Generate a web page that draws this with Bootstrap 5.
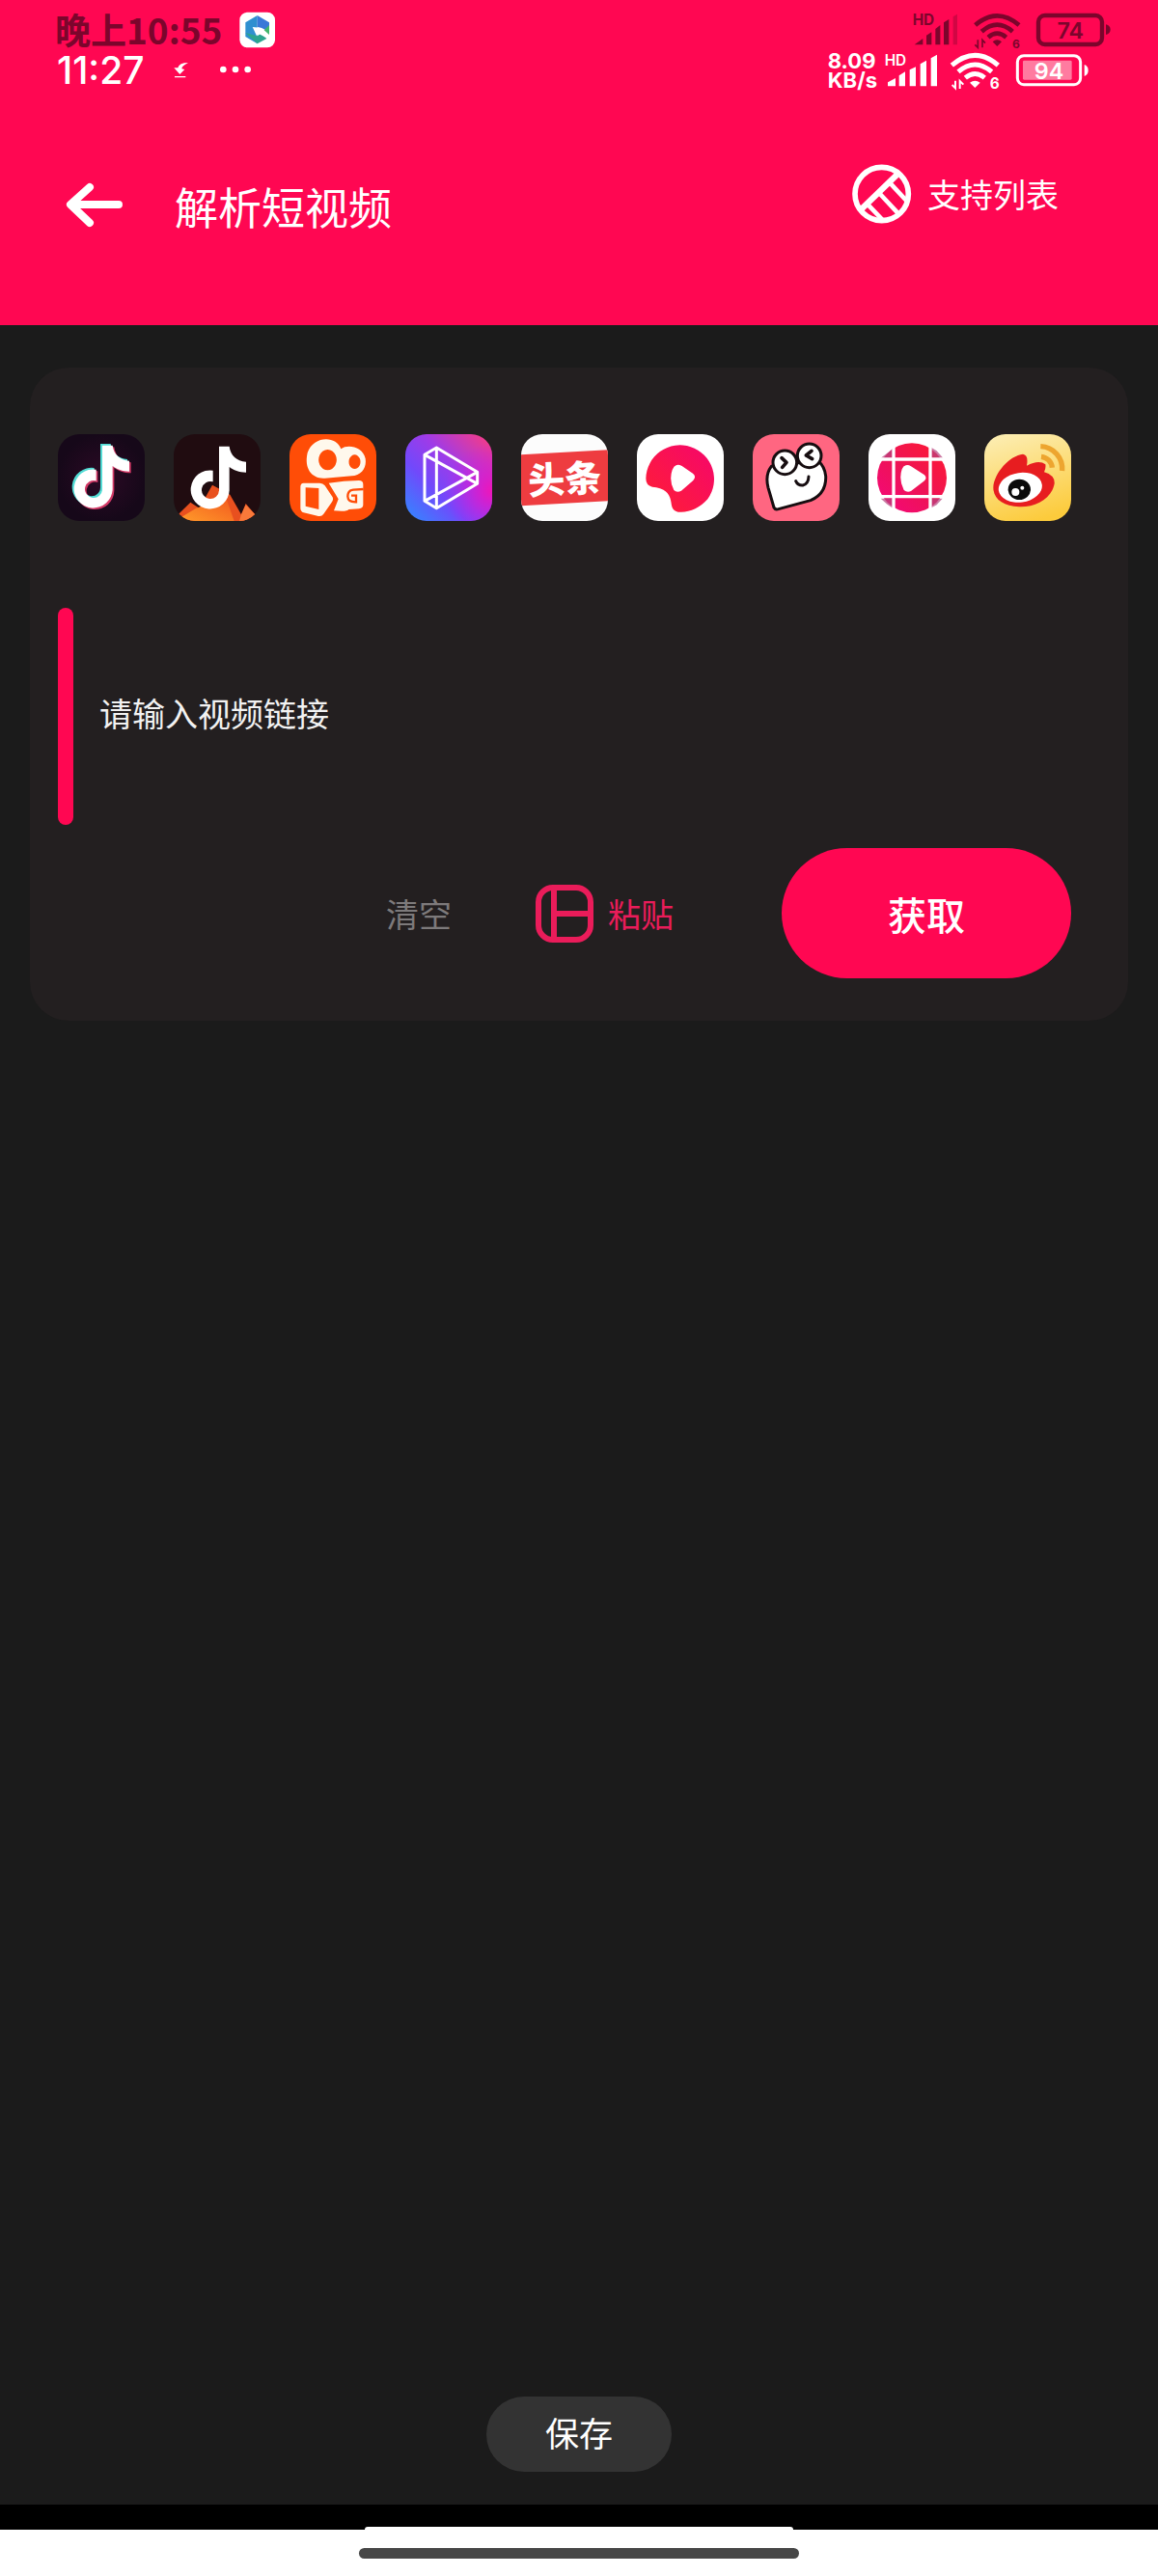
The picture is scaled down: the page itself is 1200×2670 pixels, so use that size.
<!DOCTYPE html>
<html lang="zh-CN">
<head>
<meta charset="utf-8">
<meta name="viewport" content="width=device-width, initial-scale=1">
<title>解析短视频</title>
<link href="https://cdn.jsdelivr.net/npm/bootstrap@5.3.0/dist/css/bootstrap.min.css" rel="stylesheet">
<style>
  :root { --pink: #ff0752; --ink: #7c052c; --panel: #231f20; --bg: #1b1b1b; }
  body { background: var(--bg); color: #fff; font-family: "Noto Sans CJK SC", "Noto Sans", sans-serif; font-size: 34px; line-height: 48px; }
  svg { display: block; flex: none; overflow: visible; }
  svg text { font-family: Inter, sans-serif; }
  .top-area { background: var(--pink); padding: 12px 0 93px; }
  .status-old { color: var(--ink); height: 41px; gap: 18px; line-height: 36px; font-size: 37px; font-weight: 700; padding: 0 48px 0 57px; }
  .status-new { height: 40px; line-height: 40px; padding: 0 71px 0 59px; }
  .clock { font-family: Inter, sans-serif; font-size: 39px; font-weight: 500; }
  .speed { font-family: Inter, sans-serif; font-size: 22px; line-height: 20px; font-weight: 700; }
  .gap-status { gap: 16px; }
  .gap-signal { gap: 13px; }
  .title-row { padding: 75px 103px 0 68px; }
  .title-row h1 { font-size: 45px; line-height: 60px; font-weight: 400; margin: 16px 0 0 53px; }
  .back-btn { padding: 20px 0 0; border: 0; border-radius: 0; }
  .support-link { color: #fff; gap: 16px; height: 66px; }
  .panel { background: var(--panel); border-radius: 40px; margin: 44px 31px 0; padding: 69px 59px 44px 29px; }
  .app-list { gap: 30px; }
  .app-list svg { width: 90px; height: 90px; border-radius: 22px; overflow: hidden; }
  .link-row { margin-top: 90px; height: 225px; }
  .accent { width: 16px; border-radius: 8px; background: var(--pink); }
  .link-input, .link-input:focus { background: transparent; color: #fff; border: 0; box-shadow: none; font-size: 34px; padding: 0 0 8px 27px; }
  .link-input::placeholder { color: #f2f2f2; opacity: 1; }
  .action-row { margin-top: 24px; }
  .clear-btn, .paste-btn { font-size: 34px; line-height: 48px; padding: 0; border: 0; color: #7d7a7b; }
  .paste-btn { color: #ea1c5a; gap: 14px; margin: 0 112px 0 86px; }
  .get-btn { background: var(--pink); color: #fff; width: 300px; height: 135px; font-size: 40px; font-weight: 500; border: 0; }
  .save-btn { background: #333; color: #fff; width: 192px; height: 78px; font-size: 35px; line-height: 48px; border: 0; padding: 0 0 4px; margin-bottom: 34px; }
  .nav-black { background: #000; height: 26px; }
  .nav-tab { width: 444px; height: 3px; background: #fff; border-radius: 3px 3px 0 0; }
  .nav-white { background: #fff; height: 48px; padding-top: 19px; }
  .home-bar { width: 456px; height: 11px; border-radius: 6px; background: #474747; }
</style>
</head>
<body>
<div class="d-flex flex-column min-vh-100">
  <header class="top-area">
    <div class="status-old d-flex align-items-start">
      <span>晚上10:55</span>
      <svg width="38" height="38" viewBox="741 36 114 114" aria-hidden="true">
        <rect x="742" y="38" width="110" height="110" rx="24" fill="#fff"/>
        <path d="M797 48 760 70V114L797 136Z" fill="#2f8fd0"/><path d="M797 48 834 70V100L812 88 797 84Z" fill="#3a78d8"/>
        <path d="M760 102 797 136 826 120 808 104 797 112Z" fill="#2ca58f"/><path d="M834 78V108L818 94Z" fill="#43b56b"/>
        <path d="M782 84 812 87 806 94 832 110 826 118 800 104 795 112Z" fill="#fff"/>
      </svg>
      <div class="d-flex gap-status ms-auto">
        <svg width="47" height="38" viewBox="318 36 141 114" fill="#7c052c">
          <text x="317" y="77" font-size="46" font-weight="700">HD</text>
          <path d="M323 139 349 120V139ZM360 110 376 100V139H360ZM388 90 403 78V139H388ZM414 70 430 60V139H414Z"/>
          <path d="M443 52 456 44V139H443Z" opacity=".35"/>
        </svg>
        <svg width="49" height="38" viewBox="507 36 147 114" fill="none" stroke="#7c052c" stroke-width="14">
          <path d="M512 78Q580 20 648 78M532 98Q580 56 628 98M552 116Q580 92 608 116"/>
          <path d="M566 130Q580 118 594 130L580 144Z" fill="#7c052c" stroke="none"/>
          <path d="M520 124V148L511 139M534 148V124L543 134" stroke-width="5"/>
          <text x="627" y="149" font-size="36" font-weight="700" fill="#7c052c" stroke="none">6</text>
        </svg>
        <svg width="78" height="38" viewBox="702 36 234 114">
          <rect x="708" y="48" width="198" height="90" rx="20" fill="none" stroke="#7c052c" stroke-width="13"/>
          <path d="M918 76q14 4 14 16t-14 16Z" fill="#7c052c"/>
          <text x="808" y="120" text-anchor="middle" font-size="70" font-weight="600" fill="#7c052c">74</text>
        </svg>
      </div>
    </div>
    <div class="status-new d-flex align-items-start">
      <span class="clock">11:27</span>
      <svg class="ms-4" width="84" height="40" viewBox="525 156 252 120" fill="#fff">
        <path d="M588 192Q560 192 556 208L544 208 562 228 577 213 568 211Q568 202 588 192ZM546 234H580V238H546Z"/>
        <circle cx="697" cy="213" r="10"/><circle cx="735" cy="213" r="10"/><circle cx="773" cy="213" r="10"/>
      </svg>
      <div class="d-flex gap-signal ms-auto">
        <div class="d-flex gap-2">
          <div class="speed">8.09<br>KB/s</div>
          <svg width="55" height="40" viewBox="231 156 165 120" fill="#fff">
            <text x="230" y="201" font-size="46" font-weight="600">HD</text>
            <path d="M240 265V253L264 240V265ZM275 265V232L294 220V265ZM308 265V214L327 205V265ZM341 265V196L360 185V265ZM374 265V178L393 167V265Z"/>
          </svg>
        </div>
        <svg class="me-1" width="51" height="40" viewBox="435 156 153 120" fill="none" stroke="#fff" stroke-width="15">
          <path d="M439 200Q511 138 583 200M459 220Q511 176 563 220M481 239Q511 214 541 239"/>
          <path d="M495 254Q511 242 527 254L511 270Z" fill="#fff" stroke="none"/>
          <path d="M450 248V271L440 261M464 273V249L475 260" stroke-width="6"/>
          <text x="557" y="273" font-size="46" font-weight="700" fill="#fff" stroke="none">6</text>
        </svg>
        <svg width="76" height="40" viewBox="636 156 228 120">
          <rect x="640" y="170" width="196" height="90" rx="20" fill="none" stroke="#fff" stroke-width="9"/>
          <rect x="657" y="185" width="152" height="60" rx="4" fill="#ff7ba0"/>
          <path d="M848 198q12 4 12 18t-12 18Z" fill="#fff"/>
          <text x="738" y="242" text-anchor="middle" font-size="70" font-weight="600" fill="#fff">94</text>
        </svg>
      </div>
    </div>
    <div class="title-row d-flex align-items-start">
      <button type="button" class="btn back-btn" aria-label="返回">
        <svg width="60" height="48" viewBox="0 0 60 48" fill="none" stroke="#fff" stroke-width="8" stroke-linecap="round" stroke-linejoin="round"><path d="M25 6 5 24 25 43M6 24H55"/></svg>
      </button>
      <h1>解析短视频</h1>
      <a href="#" class="support-link d-flex align-items-center text-decoration-none ms-auto">
        <svg width="62" height="62" viewBox="69 54 186 186" fill="none" stroke="#fff" stroke-width="14">
          <circle cx="161" cy="147" r="83" stroke-width="17"/>
          <path d="M98 194 208 88" stroke-width="19"/><path d="M186 112 238 168M153 144 210 205M116 178 164 228"/>
        </svg>
        <span>支持列表</span>
      </a>
    </div>
  </header>

  <main class="flex-grow-1 d-flex flex-column">
    <section class="panel">
      <div class="app-list d-flex flex-wrap">
        <svg viewBox="120 240 270 270" role="img" aria-label="抖音">
          <defs>
            <radialGradient id="night"><stop stop-color="#2c0a25"/><stop offset="1" stop-color="#160819"/></radialGradient>
            <path id="note" d="M257 274H289C292 302 312 319 341 322V355C319 355 302 348 289 338V410A60 60 0 1 1 238 349V384A27 27 0 1 0 257 410Z"/>
          </defs>
          <path d="M120 240h270v270H120z" fill="url(#night)"/>
          <use href="#note" x="6" y="6" fill="#d33a67"/><use href="#note" x="-5" y="-4" fill="#52dcd5"/><use href="#note" x="1" y="1" fill="#fff"/>
        </svg>
        <svg viewBox="480 240 270 270" role="img" aria-label="抖音火山版">
          <defs><linearGradient id="lava" x1="0" y1="1" x2="1" y2="0"><stop stop-color="#ff9b2a"/><stop offset="1" stop-color="#f2551e"/></linearGradient></defs>
          <path d="M480 240h270v270H480z" fill="#200c10"/>
          <path d="M494 490 532 452 560 470 600 398 655 428 690 490 704 456 735 492 722 510H505Z" fill="#e8501f"/>
          <path d="M500 500 550 470 612 448 640 430 668 510H505Z" fill="url(#lava)"/><path d="M690 490 704 460 735 492 722 510H684Z" fill="#f9793a"/>
          <use href="#note" x="364" y="4" fill="#fff"/>
        </svg>
        <svg viewBox="840 240 270 270" role="img" aria-label="快手">
          <path d="M840 240h270v270H840z" fill="#ff4d07"/>
          <path fill="#fff8ec" fill-rule="evenodd" d="M1000 286C986 244 914 244 896 298C884 350 912 380 950 377L1042 369C1068 364 1080 340 1076 316C1068 280 1022 270 1000 286ZM958 288A28 32 0 1 0 959 288ZM1042 304A18 22 0 1 0 1043 304Z"/>
          <path fill="#fff8ec" fill-rule="evenodd" d="M884 392H934Q944 392 950 400L974 436Q977 443 972 451L946 488Q940 497 930 495L884 484Q874 480 874 470V404Q874 392 884 392ZM890 406V464L931 474V408Z"/>
          <path fill="#fff8ec" d="M962 392Q1010 384 1056 384Q1069 384 1069 396V460Q1069 470 1056 472L1024 474Q1020 482 978 478L992 442Z"/>
          <path d="M1070 411 1038 413Q1021 415 1021 434Q1022 452 1047 451V431H1032" fill="none" stroke="#ff4d07" stroke-width="7"/>
        </svg>
        <svg viewBox="60 60 270 270" role="img" aria-label="微视">
          <defs>
            <linearGradient id="vio" x1="0" y1="1" x2="1" y2="0"><stop stop-color="#2e8bff"/><stop offset=".35" stop-color="#7149fb"/><stop offset=".6" stop-color="#9e3be8"/><stop offset="1" stop-color="#ff3b7c"/></linearGradient>
            <radialGradient id="mag" cx="1" cy=".65" r=".55"><stop stop-color="#ef16b8"/><stop offset="1" stop-color="#c71af0" stop-opacity="0"/></radialGradient>
          </defs>
          <path d="M60 60h270v270H60z" fill="url(#vio)"/><path d="M60 60h270v270H60z" fill="url(#mag)"/>
          <path d="M120 124 157 102 284 178V214L157 290 120 268ZM157 102V290M120 124 284 214M120 268 284 178" fill="none" stroke="#fff" stroke-width="9" stroke-linejoin="round"/>
        </svg>
        <svg viewBox="420 60 270 270" role="img" aria-label="头条">
          <path d="M420 60h270v270H420z" fill="#fcfcfc"/><path d="M420 124 690 109V268L420 283Z" fill="#ee3c40"/>
          <text x="556" y="242" text-anchor="middle" font-size="114" font-weight="900" fill="#fff" transform="rotate(-3 555 200)" style="font-family:'Noto Sans CJK SC',sans-serif">头条</text>
        </svg>
        <svg viewBox="780 60 270 270" role="img" aria-label="西瓜视频">
          <defs><linearGradient id="melon" x1="0" y1="1" x2="1" y2="0"><stop stop-color="#ff1f33"/><stop offset="1" stop-color="#f5066c"/></linearGradient></defs>
          <path d="M780 60h270v270H780z" fill="#fff"/>
          <path d="M808 198A106 106 0 1 1 1000 262C975 290 940 306 908 302C884 297 890 278 883 258C875 234 852 226 828 224Q808 220 808 198Z" fill="url(#melon)"/>
          <path d="M902 157Q908 153 920 159L954 182Q966 192 955 204L918 236Q904 243 895 234Q879 203 890 171Q895 159 902 157Z" fill="#fff"/>
        </svg>
        <svg viewBox="60 60 270 270" role="img" aria-label="皮皮虾">
          <path d="M60 60h270v270H60z" fill="#ff6681"/>
          <g fill="#fff" stroke="#160d10" stroke-width="9" stroke-linejoin="round" stroke-linecap="round">
            <path d="M118 160Q98 186 108 226L126 288Q130 296 140 293L240 266Q290 244 287 190Q284 160 262 142Z"/>
            <circle cx="160" cy="148" r="37"/><circle cx="236" cy="127" r="37"/>
            <path d="M150 134 165 148 152 163M243 112 226 126 245 137" fill="none" stroke-width="11"/>
            <path d="M194 206Q200 220 216 219Q233 215 234 192" fill="none"/>
          </g>
        </svg>
        <svg viewBox="420 60 270 270" role="img" aria-label="好看视频">
          <defs><linearGradient id="ball" x1="0" y1="1" x2="1" y2="0"><stop stop-color="#f5067e"/><stop offset=".5" stop-color="#ee1355"/><stop offset="1" stop-color="#ff1a30"/></linearGradient></defs>
          <path d="M420 60h270v270H420z" fill="#fff"/><circle cx="555" cy="196" r="108" fill="url(#ball)"/>
          <path d="M482 116 500 100V134H458ZM610 98 632 112 652 134H610ZM458 260H498V292L478 278ZM610 260H650L632 280 610 292Z" fill="#b8457f" opacity=".7"/>
          <path d="M498 80V312M612 80V312M440 138H670M440 254H670" stroke="#fff" stroke-width="10"/>
          <path d="M536 157Q543 154 552 160L594 187Q603 196 594 205L552 237Q540 242 530 234Q513 201 524 169Q528 159 536 157Z" fill="#fff"/>
        </svg>
        <svg viewBox="780 60 270 270" role="img" aria-label="微博">
          <defs><linearGradient id="sun" x1=".3" y1="0" x2=".6" y2="1"><stop stop-color="#fcecae"/><stop offset="1" stop-color="#fccb3c"/></linearGradient></defs>
          <path d="M780 60h270v270H780z" fill="url(#sun)"/>
          <path d="M955 98A70 70 0 0 1 1022 174M957 130A38 38 0 0 1 991 164" fill="none" stroke="#eda52f" stroke-width="16"/>
          <path d="M808 226C810 180 860 126 900 122Q918 124 912 158Q950 138 970 154Q972 166 966 178Q1000 188 998 214C990 260 940 288 888 286C840 284 808 262 808 226Z" fill="#e71d20"/>
          <ellipse cx="892" cy="226" rx="68" ry="46" fill="#fff" transform="rotate(-8 892 226)"/>
          <ellipse cx="889" cy="232" rx="35" ry="32" fill="#0b0b0b"/><circle cx="877" cy="240" r="12" fill="#fff"/><circle cx="898" cy="227" r="6" fill="#fff"/>
        </svg>
      </div>

      <div class="link-row d-flex">
        <div class="accent flex-shrink-0"></div>
        <input type="text" class="form-control link-input" placeholder="请输入视频链接" aria-label="请输入视频链接">
      </div>

      <div class="action-row d-flex align-items-center justify-content-end">
        <button type="button" class="btn clear-btn">清空</button>
        <button type="button" class="btn paste-btn d-flex align-items-center">
          <svg width="62" height="62" viewBox="0 0 62 62" fill="none" stroke="#ea1c5a" stroke-width="6"><rect x="4" y="4" width="54" height="54" rx="15"/><path d="M20 4V58M20 31H58"/></svg>
          <span>粘贴</span>
        </button>
        <button type="button" class="btn get-btn rounded-pill">获取</button>
      </div>
    </section>

    <button type="button" class="btn save-btn rounded-pill mt-auto mx-auto">保存</button>
  </main>

  <footer>
    <div class="nav-black d-flex justify-content-center align-items-end"><div class="nav-tab"></div></div>
    <div class="nav-white"><div class="home-bar mx-auto"></div></div>
  </footer>
</div>
<script src="https://cdn.jsdelivr.net/npm/bootstrap@5.3.0/dist/js/bootstrap.bundle.min.js"></script>
</body>
</html>
